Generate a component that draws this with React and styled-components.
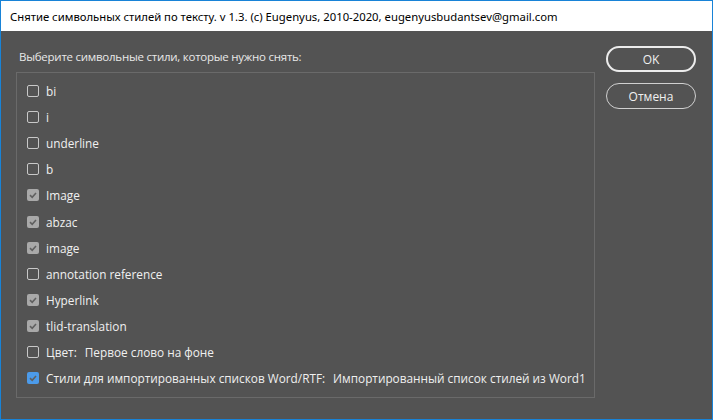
import styled, { createGlobalStyle } from 'styled-components';

const GlobalStyle = createGlobalStyle`
  html, body {
    margin: 0;
    padding: 0;
    background: #535353;
  }
`;

const Window = styled.div`
  width: 713px;
  height: 420px;
  box-sizing: border-box;
  border: 1px solid #1883d7;
  display: flex;
  flex-direction: column;
  background: #535353;
  overflow: hidden;
`;

const TitleBar = styled.div`
  height: 30px;
  flex: none;
  background: #ffffff;
  display: flex;
  align-items: center;
  padding-left: 9px;
  font-family: 'Noto Sans', sans-serif;
  font-size: 11.3px;
  color: #000;
`;

const Body = styled.div`
  flex: 1;
  display: flex;
  padding: 15px 16px 0 15px;
  gap: 11px;
`;

const Main = styled.div`
  width: 580px;
  display: flex;
  flex-direction: column;
`;

const Prompt = styled.div`
  font-family: 'Open Sans', 'DejaVu Sans', sans-serif;
  font-size: 11.5px;
  letter-spacing: -0.25px;
  color: #e8e8e8;
  padding-left: 3px;
  height: 26px;
  line-height: 22px;
`;

const Group = styled.div`
  height: 326px;
  box-sizing: border-box;
  border: 1px solid #6a6a6a;
  padding: 5px 0 0 10px;
  display: flex;
  flex-direction: column;
`;

const Row = styled.label`
  display: flex;
  align-items: center;
  gap: 7px;
  height: 26.1px;
  font-family: 'Open Sans', 'DejaVu Sans', sans-serif;
  font-size: 11.8px;
  color: #f0f0f0;
  white-space: nowrap;
`;

const Box = styled.span`
  width: 12px;
  height: 12px;
  box-sizing: border-box;
  border-radius: 2px;
  flex: none;
  display: flex;
  align-items: center;
  justify-content: center;
  border: ${(p) => (p.$state === 'off' ? '1px solid #c8c8c8' : 'none')};
  background: ${(p) =>
    p.$state === 'on' ? '#4c9bea' : p.$state === 'dim' ? '#a9a9a9' : 'transparent'};
`;

const Gap = styled.span`
  display: inline-block;
  width: 8px;
`;

const Side = styled.div`
  display: flex;
  flex-direction: column;
  gap: 11px;
`;

const Button = styled.button`
  width: 90px;
  height: 26px;
  border-radius: 13px;
  background: transparent;
  box-sizing: border-box;
  border: ${(p) => (p.$primary ? '2px solid #ececec' : '1px solid #d0d0d0')};
  color: #f0f0f0;
  font-family: 'Open Sans', 'DejaVu Sans', sans-serif;
  font-size: 12px;
  padding: 0;
`;

function Check() {
  return (
    <svg width="10" height="10" viewBox="0 0 10 10">
      <path d="M2 5.2 L4.2 7.3 L8 3" fill="none" stroke="#606060" strokeWidth="1.6" />
    </svg>
  );
}

const items = [
  { label: 'bi', state: 'off' },
  { label: 'i', state: 'off' },
  { label: 'underline', state: 'off' },
  { label: 'b', state: 'off' },
  { label: 'Image', state: 'dim' },
  { label: 'abzac', state: 'dim' },
  { label: 'image', state: 'dim' },
  { label: 'annotation reference', state: 'off' },
  { label: 'Hyperlink', state: 'dim' },
  { label: 'tlid-translation', state: 'dim' },
  { label: ['Цвет:', 'Первое слово на фоне'], state: 'off' },
  {
    label: ['Стили для импортированных списков Word/RTF:', 'Импортированный список стилей из Word1'],
    state: 'on',
  },
];

export default function App() {
  return (
    <>
      <GlobalStyle />
      <Window>
        <TitleBar>
          Снятие символьных стилей по тексту. v 1.3. (c) Eugenyus, 2010-2020, eugenyusbudantsev@gmail.com
        </TitleBar>
        <Body>
          <Main>
            <Prompt>Выберите символьные стили, которые нужно снять:</Prompt>
            <Group>
              {items.map((it, i) => (
                <Row key={i}>
                  <Box $state={it.state}>{it.state !== 'off' && <Check />}</Box>
                  {Array.isArray(it.label) ? (
                    <span>
                      {it.label[0]}
                      <Gap />
                      {it.label[1]}
                    </span>
                  ) : (
                    <span>{it.label}</span>
                  )}
                </Row>
              ))}
            </Group>
          </Main>
          <Side>
            <Button $primary>OK</Button>
            <Button>Отмена</Button>
          </Side>
        </Body>
      </Window>
    </>
  );
}
